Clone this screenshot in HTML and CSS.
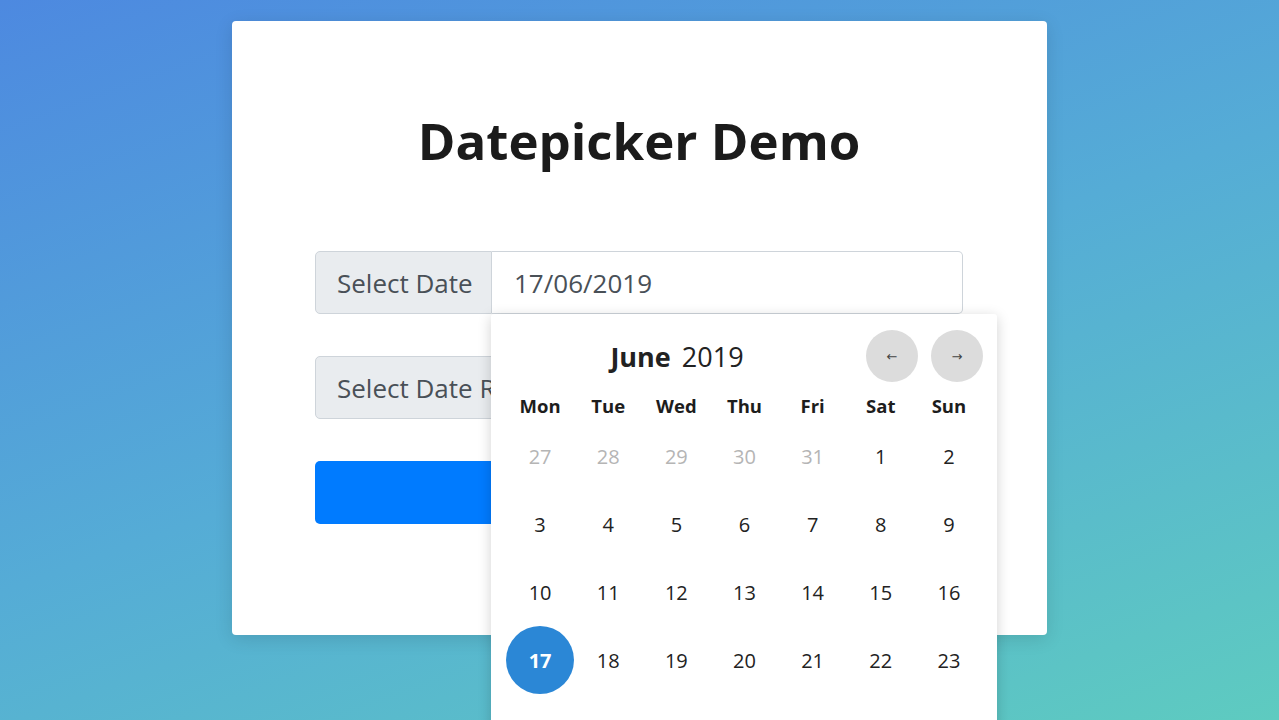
FILE: index.html
```html
<!DOCTYPE html>
<html lang="en">
<head>
    <meta charset="UTF-8">
    <meta name="viewport" content="width=device-width, initial-scale=1.0">
    <title>Datepicker Demo</title>
    <link rel="stylesheet" href="styles.css">
</head>
<body>
    <div class="card">
        <h1>Datepicker Demo</h1>

        <form class="demo-form">
            <div class="input-group">
                <span class="input-label">Select Date</span>
                <input class="input-field" type="text" value="17/06/2019">

                <div class="datepicker">
                    <div class="dp-header">
                        <div class="dp-title"><strong>June</strong> 2019</div>
                        <div class="dp-nav">
                            <button type="button" class="dp-arrow">&larr;</button>
                            <button type="button" class="dp-arrow">&rarr;</button>
                        </div>
                    </div>
                    <div class="dp-grid" id="dp-grid"></div>
                </div>
            </div>

            <div class="input-group">
                <span class="input-label">Select Date Range</span>
                <input class="input-field" type="text" value="">
            </div>

            <button type="submit" class="btn-submit">Submit</button>
        </form>
    </div>

    <script>
        // Build the June 2019 month view (weeks start on Monday)
        const days = ['Mon', 'Tue', 'Wed', 'Thu', 'Fri', 'Sat', 'Sun'];
        let html = '';

        days.forEach(d => {
            html += `<div class="dp-dow">${d}</div>`;
        });

        // trailing days of May
        for (let d = 27; d <= 31; d++) {
            html += `<div class="dp-day muted">${d}</div>`;
        }
        for (let d = 1; d <= 30; d++) {
            const cls = d === 17 ? 'dp-day selected' : 'dp-day';
            html += `<div class="${cls}">${d}</div>`;
        }
        // leading days of July
        for (let d = 1; d <= 7; d++) {
            html += `<div class="dp-day muted">${d}</div>`;
        }

        document.getElementById('dp-grid').innerHTML = html;
    </script>
</body>
</html>
```

FILE: styles.css
```css
html, body {
    height: 100%;
}
body {
    margin: 0;
    font-family: "Open Sans", "Noto Sans", Arial, sans-serif;
    color: #212529;
    background: linear-gradient(160deg, #4d89e0 0%, #55acd6 50%, #5ecbc0 100%);
    overflow: hidden;
}
.card {
    width: 815px;
    height: 614px;
    margin: 21px auto 0;
    box-sizing: border-box;
    padding: 0 84px 0 83px;
    background: #fff;
    border-radius: 4px;
    box-shadow: 0 4px 18px rgba(0, 0, 0, 0.12);
}
h1 {
    margin: 0;
    padding-top: 83px;
    height: 72px;
    line-height: 72px;
    text-align: center;
    font-size: 51px;
    font-weight: 700;
    color: #1b1b1b;
}
.demo-form {
    margin-top: 75px;
}
.input-group {
    position: relative;
    display: flex;
    height: 63px;
    margin-bottom: 42px;
}
.input-label {
    display: flex;
    align-items: center;
    padding: 0 21px;
    width: 177px;
    box-sizing: border-box;
    white-space: nowrap;
    overflow: hidden;
    background: #e9ecef;
    border: 1px solid #ced4da;
    border-radius: 5px 0 0 5px;
    font-size: 26px;
    color: #495057;
}
.input-field {
    flex: 1;
    min-width: 0;
    margin: 0;
    padding: 0 22px;
    border: 1px solid #ced4da;
    border-left: 0;
    border-radius: 0 5px 5px 0;
    font-family: inherit;
    font-size: 26px;
    color: #495057;
    outline: none;
}
.btn-submit {
    display: block;
    width: 100%;
    height: 63px;
    border: 0;
    border-radius: 5px;
    background: #007bff;
    color: #fff;
    font-family: inherit;
    font-size: 24px;
}

/* popup calendar */
.datepicker {
    position: absolute;
    z-index: 10;
    top: 63px;
    left: 176px;
    width: 506px;
    box-sizing: border-box;
    padding: 16px 14px 20px 15px;
    background: #fff;
    border-radius: 3px;
    box-shadow: 0 3px 14px rgba(0, 0, 0, 0.18);
}
.dp-header {
    display: flex;
    align-items: center;
    height: 52px;
    margin-bottom: 6px;
}
.dp-title {
    flex: 1;
    text-align: center;
    font-size: 27px;
    color: #222;
}
.dp-title strong {
    margin-right: 4px;
}
.dp-nav {
    display: flex;
    gap: 13px;
    margin-left: 18px;
}
.dp-arrow {
    width: 52px;
    height: 52px;
    padding: 0;
    border: 0;
    border-radius: 50%;
    background: #dcdcdc;
    color: #444;
    font-size: 13px;
    font-family: "DejaVu Sans", sans-serif;
}
.dp-grid {
    display: grid;
    grid-template-columns: repeat(7, 1fr);
    grid-template-rows: 34px;
    grid-auto-rows: 68px;
}
.dp-dow {
    display: flex;
    align-items: center;
    justify-content: center;
    font-size: 18.5px;
    font-weight: 700;
    color: #1d1d1d;
}
.dp-day {
    display: flex;
    align-items: center;
    justify-content: center;
    font-size: 20px;
    color: #222;
    border-radius: 50%;
}
.dp-day.muted {
    color: #b5b5b5;
}
.dp-day.selected {
    background: #2b87d6;
    color: #fff;
    font-weight: 700;
}
```
